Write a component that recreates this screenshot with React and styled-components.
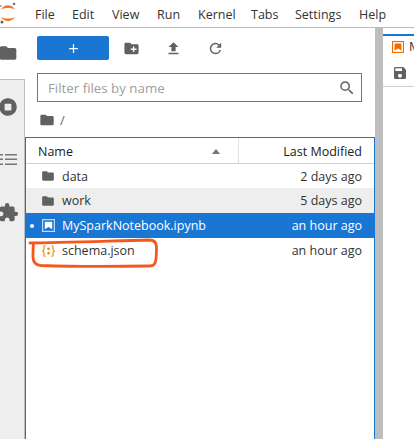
import React from 'react';
import styled, { createGlobalStyle } from 'styled-components';
import { FaStopCircle } from 'react-icons/fa';
import { MdFolder, MdExtension, MdSave, MdCreateNewFolder, MdFileUpload, MdRefresh, MdSearch, MdAdd } from 'react-icons/md';

const GlobalStyle = createGlobalStyle`
  html, body { margin: 0; padding: 0; height: 100%; background: #fff; overflow: hidden; }
  body { font-family: "Open Sans", "Noto Sans", sans-serif; color: #333; }
  #root { height: 100%; }
`;

const Page = styled.div`
  position: relative;
  width: 414px;
  height: 439px;
  display: flex;
  flex-direction: column;
  overflow: hidden;
`;

const MenuBar = styled.div`
  height: 27px;
  flex: none;
  display: flex;
  align-items: flex-start;
  border-bottom: 1px solid #bdbdbd;
  box-sizing: content-box;
`;

const Logo = styled.svg`
  width: 35px;
  height: 27px;
  flex: none;
`;

const MenuItem = styled.div`
  width: ${(p) => p.$w}px;
  flex: none;
  padding-top: 3px;
  font-size: 12.5px;
  line-height: 24px;
  color: #333;
`;

const Main = styled.div`
  flex: 1;
  display: flex;
  min-height: 0;
`;

const SideBar = styled.div`
  width: 24px;
  flex: none;
  display: flex;
  flex-direction: column;
  border-right: 1px solid #bdbdbd;
  background: #eee;
  color: #616161;
`;

const ActiveTab = styled.div`
  height: 52px;
  flex: none;
  margin-right: -1px;
  background: #fff;
  border-bottom: 1px solid #bdbdbd;
  box-sizing: border-box;
  padding-top: 15px;
  overflow: hidden;
  font-size: 20px;
`;

const SideIcon = styled.div`
  height: 53px;
  flex: none;
  display: flex;
  align-items: center;
  justify-content: center;
  margin-left: -8px;
  font-size: ${(p) => p.$size}px;
`;

const FolderCut = styled(MdFolder)`
  display: block;
  margin-left: -2px;
`;

const Browser = styled.div`
  width: 350px;
  flex: none;
  display: flex;
  flex-direction: column;
  background: #fff;
`;

const Toolbar = styled.div`
  height: 24px;
  flex: none;
  margin: 8px 12px 0;
  display: flex;
  align-items: center;
  color: #616161;
`;

const NewButton = styled.div`
  width: 72px;
  height: 24px;
  flex: none;
  display: flex;
  align-items: center;
  justify-content: center;
  background: #1976d2;
  border-radius: 2px;
  color: #fff;
  font-size: 15px;
  margin-right: 1px;
`;

const ToolButton = styled.div`
  width: 42px;
  flex: none;
  display: flex;
  justify-content: center;
  font-size: 17px;
`;

const FilterBox = styled.div`
  height: 29px;
  width: 325px;
  flex: none;
  margin: 13px 0 0 12px;
  box-sizing: border-box;
  border: 1px solid #757575;
  display: flex;
  align-items: center;
  justify-content: space-between;
  padding: 0 5px 0 10px;
  font-size: 13.3px;
  color: #9e9e9e;
  svg { color: #616161; font-size: 18px; }
`;

const Crumbs = styled.div`
  height: 35px;
  flex: none;
  display: flex;
  align-items: center;
  gap: 5px;
  padding: 0 0 0 14px;
  font-size: 13px;
  color: #616161;
  svg { font-size: 16px; }
`;

const Listing = styled.div`
  flex: 1;
  display: flex;
  flex-direction: column;
  border: 1px solid #1976d2;
  border-bottom: none;
`;

const HeaderRow = styled.div`
  height: 25px;
  flex: none;
  display: flex;
  border-bottom: 2px solid #d0d0d0;
  box-sizing: content-box;
  font-size: 12.5px;
  color: #212121;
`;

const NameHead = styled.div`
  width: 213px;
  flex: none;
  display: flex;
  align-items: center;
  justify-content: space-between;
  padding: 1px 18px 0 12px;
  box-sizing: border-box;
  border-right: 1px solid #e0e0e0;
`;

const ModifiedHead = styled.div`
  flex: 1;
  display: flex;
  align-items: center;
  justify-content: flex-end;
  padding: 1px 12px 0 0;
`;

const SortArrow = styled.span`
  width: 0;
  height: 0;
  border-left: 4.5px solid transparent;
  border-right: 4.5px solid transparent;
  border-bottom: 5px solid #757575;
`;

const Row = styled.div`
  height: ${(p) => (p.$first ? '24px' : '25px')};
  flex: none;
  margin-top: ${(p) => (p.$first ? '-1px' : '0')};
  display: flex;
  align-items: center;
  font-size: 12.5px;
  padding-right: 12px;
  background: ${(p) => (p.$selected ? '#1976d2' : p.$alt ? '#eeeeee' : '#fff')};
  color: ${(p) => (p.$selected ? '#fff' : '#333')};
`;

const RowDot = styled.span`
  width: 4px;
  height: 4px;
  border-radius: 50%;
  flex: none;
  margin-left: 4px;
  background: ${(p) => (p.$on ? '#fff' : 'transparent')};
`;

const RowIcon = styled.span`
  width: 14px;
  flex: none;
  display: flex;
  justify-content: center;
  margin: 0 7px 0 7px;
  font-size: 16px;
  color: #616161;
`;

const RowName = styled.span`
  flex: 1;
  white-space: nowrap;
`;

const Splitter = styled.div`
  width: 8px;
  flex: none;
  background: #bdbdbd;
`;

const DocPanel = styled.div`
  flex: 1;
  min-width: 0;
  display: flex;
  flex-direction: column;
  overflow: hidden;
`;

const TabStrip = styled.div`
  height: 21px;
  flex: none;
  margin-top: 6px;
  border-top: 2px solid #1976d2;
  display: flex;
  align-items: center;
  gap: 5px;
  padding-left: 9px;
  font-size: 12.5px;
  white-space: nowrap;
  box-sizing: content-box;
  svg { flex: none; }
`;

const DocToolbar = styled.div`
  height: 30px;
  flex: none;
  box-sizing: border-box;
  border-bottom: 1px solid #d0d0d0;
  display: flex;
  align-items: center;
  padding: 2px 0 0 9px;
  font-size: 16px;
  color: #616161;
`;

const Annotation = styled.svg`
  position: absolute;
  left: 0;
  top: 0;
  pointer-events: none;
`;

const menus = [
  ['File', 37],
  ['Edit', 40],
  ['View', 45],
  ['Run', 41],
  ['Kernel', 53],
  ['Tabs', 44],
  ['Settings', 64],
  ['Help', 40],
];

const NotebookIcon = ({ size = 13, rim = '#ef6c00', gap = '#fff', fill = '#ef6c00' }) => (
  <svg width={size} height={size} viewBox="0 0 13 13">
    <rect x="0.6" y="0.6" width="11.8" height="11.8" fill={gap} stroke={rim} strokeWidth="1.2" />
    <path d="M2.800 2.800h7.400v7.400L6.500 8 2.800 10.200z" fill={fill} />
  </svg>
);

const ListIcon = () => (
  <svg width="17" height="13" viewBox="0 0 17 13" fill="#757575">
    <rect x="0" y="1" width="3" height="1.500" />
    <rect x="5" y="1" width="12" height="1.500" />
    <rect x="0" y="5.500" width="3" height="1.500" />
    <rect x="5" y="5.500" width="12" height="1.500" />
    <rect x="0" y="10.500" width="3" height="1.500" />
    <rect x="5" y="10.500" width="12" height="1.500" />
  </svg>
);

const JsonIcon = () => (
  <svg width="13" height="12" viewBox="0 0 13 12" fill="none" stroke="#f5a11c" strokeWidth="1.400">
    <path d="M3.500.8h-.6C1.900.8 1.900 1.800 1.900 2.600v1.600C1.900 5.300 1.200 5.800.5 6c.7.2 1.400.7 1.400 1.800v1.600c0 .8 0 1.800 1 1.800h.6" />
    <path d="M9.500.8h.6c1 0 1 1 1 1.800v1.600c0 1.100.7 1.600 1.400 1.800-.7.2-1.400.7-1.400 1.800v1.600c0 .8 0 1.800-1 1.800h-.6" />
    <circle cx="6.500" cy="3.800" r="1.200" fill="#ef7d00" stroke="none" />
    <circle cx="6.500" cy="8.200" r="1.200" fill="#ef7d00" stroke="none" />
  </svg>
);

const rows = [
  { name: 'data', when: '2 days ago', kind: 'folder' },
  { name: 'work', when: '5 days ago', kind: 'folder', alt: true },
  { name: 'MySparkNotebook.ipynb', when: 'an hour ago', kind: 'notebook', selected: true },
  { name: 'schema.json', when: 'an hour ago', kind: 'json' },
];

function FileIcon({ row }) {
  if (row.kind === 'folder') return <MdFolder />;
  if (row.kind === 'notebook') {
    return <NotebookIcon rim="#bbdefb" gap="#1976d2" fill="#fff" />;
  }
  return <JsonIcon />;
}

export default function App() {
  return (
    <Page>
      <GlobalStyle />
      <MenuBar>
        <Logo viewBox="0 0 35 27">
          <path d="M1 9.500C4 3.800 12 3.800 15 9.500C12 7.500 4 7.500 1 9.500z" fill="#f37726" />
          <path d="M1 17C4 22.500 12 22.500 15 17C12 19 4 19 1 17z" fill="#f37726" />
          <circle cx="14" cy="4" r="1.300" fill="#757575" />
          <circle cx="1" cy="6" r="1" fill="#9e9e9e" />
          <circle cx="2" cy="22" r="1.500" fill="#616161" />
        </Logo>
        {menus.map(([label, w]) => (
          <MenuItem key={label} $w={w}>{label}</MenuItem>
        ))}
      </MenuBar>
      <Main>
        <SideBar>
          <ActiveTab><FolderCut /></ActiveTab>
          <SideIcon $size={18}><FaStopCircle /></SideIcon>
          <SideIcon $size={17}><ListIcon /></SideIcon>
          <SideIcon $size={21}><MdExtension /></SideIcon>
        </SideBar>
        <Browser>
          <Toolbar>
            <NewButton><MdAdd /></NewButton>
            <ToolButton><MdCreateNewFolder /></ToolButton>
            <ToolButton><MdFileUpload /></ToolButton>
            <ToolButton><MdRefresh /></ToolButton>
          </Toolbar>
          <FilterBox>
            <span>Filter files by name</span>
            <MdSearch />
          </FilterBox>
          <Crumbs><MdFolder /><span>/</span></Crumbs>
          <Listing>
            <HeaderRow>
              <NameHead><span>Name</span><SortArrow /></NameHead>
              <ModifiedHead>Last Modified</ModifiedHead>
            </HeaderRow>
            {rows.map((row, i) => (
              <Row key={row.name} $first={i === 0} $alt={row.alt} $selected={row.selected}>
                <RowDot $on={row.selected} />
                <RowIcon><FileIcon row={row} /></RowIcon>
                <RowName>{row.name}</RowName>
                <span>{row.when}</span>
              </Row>
            ))}
          </Listing>
        </Browser>
        <Splitter />
        <DocPanel>
          <TabStrip><NotebookIcon size={12} /><span>MySparkNotebook.ipynb</span></TabStrip>
          <DocToolbar><MdSave /></DocToolbar>
        </DocPanel>
      </Main>
      <Annotation width="414" height="439" viewBox="0 0 414 439" fill="none">
        <path
          d="M30 243C60 243 110 241 149 240C154 240 156.500 242 156.500 247C156.500 252 156.500 260 155 263C154 265.500 152 266 149 266C120 266.500 70 266.500 41 265.500C35 265 33 262 33 257C33 252 33 248 33.500 244"
          stroke="#f4581c"
          strokeWidth="2.800"
          strokeLinecap="round"
          strokeLinejoin="round"
        />
      </Annotation>
    </Page>
  );
}
